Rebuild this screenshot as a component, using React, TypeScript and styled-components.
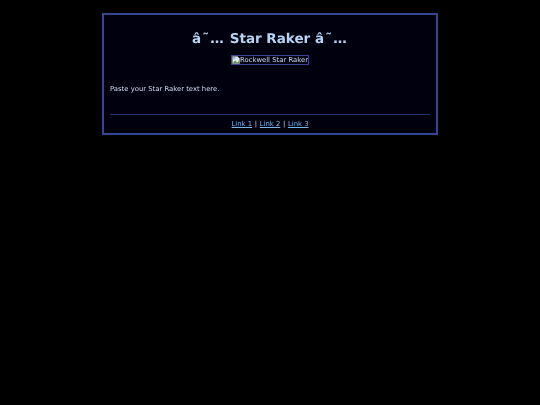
import React from 'react';
import styled, { createGlobalStyle } from 'styled-components';

const GlobalStyle = createGlobalStyle`
  html, body {
    margin: 0;
    padding: 0;
    min-height: 405px;
    background: #000000;
  }

  body {
    font-family: 'DejaVu Sans', Verdana, sans-serif;
    font-size: 6.85px;
    color: #d0dff4;
    text-rendering: geometricPrecision;
  }
`;

const Page = styled.div`
  display: flex;
  justify-content: center;
  padding-top: 13px;
  filter: blur(0.25px);
`;

const Panel = styled.main`
  box-sizing: border-box;
  width: 336px;
  height: 122px;
  padding: 0 6px;
  border: 2px solid #34488f;
  background: #00000f;
`;

const Title = styled.h1`
  margin: 15px 0 0;
  font-size: 13.5px;
  line-height: 18px;
  font-weight: 700;
  text-align: center;
  color: #b8d4f4;
`;

const Garbled = styled.span`
  letter-spacing: 1.2px;
`;

const ImageRow = styled.div`
  display: flex;
  justify-content: center;
  margin-top: 7px;
`;

const BrokenImage = styled.span`
  display: flex;
  align-items: center;
  height: 8px;
  border: 1px solid #34488f;
  line-height: 8px;
  white-space: nowrap;
`;

const BrokenIcon = styled.svg`
  flex: none;
  width: 8px;
  height: 8px;
`;

const Body = styled.p`
  margin: 19px 0 0;
  line-height: 10px;
`;

const Footer = styled.footer`
  margin-top: 20px;
  padding-top: 4px;
  border-top: 1px solid #212f6c;
  line-height: 10px;
  text-align: center;
`;

const FooterLink = styled.a`
  color: #74b8ea;
  text-decoration: underline;
`;

const Separator = styled.span`
  margin: 0 0.5px;
`;

const links = ['Link 1', 'Link 2', 'Link 3'];

export default function App() {
  return (
    <>
      <GlobalStyle />
      <Page>
        <Panel>
          <Title>
            <Garbled>â˜…</Garbled> Star Raker <Garbled>â˜…</Garbled>
          </Title>
          <ImageRow>
            <BrokenImage>
              <BrokenIcon viewBox="0 0 8 8">
                <path d="M0.5 0.5H5.5L7.5 2.5V7.5H0.5Z" fill="#dfe6f0" stroke="#a0a0a8" strokeWidth="0.6" />
                <path d="M1 7L3 4.5L5 6.5L7 5V7Z" fill="#4f9a3c" />
                <path d="M1 1H3.5V3H1Z" fill="#8fb8e8" />
              </BrokenIcon>
              Rockwell Star Raker
            </BrokenImage>
          </ImageRow>
          <Body>Paste your Star Raker text here.</Body>
          <Footer>
            {links.map((label, i) => (
              <React.Fragment key={label}>
                {i > 0 && <Separator> | </Separator>}
                <FooterLink href="#">{label}</FooterLink>
              </React.Fragment>
            ))}
          </Footer>
        </Panel>
      </Page>
    </>
  );
}
